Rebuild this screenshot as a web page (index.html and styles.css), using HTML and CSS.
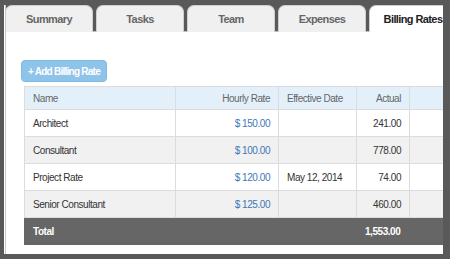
FILE: index.html
```html
<!DOCTYPE html>
<html lang="en">
<head>
  <meta charset="UTF-8" />
  <title>Billing Rates</title>
  <link rel="stylesheet" href="styles.css">
</head>
<body>
  <div class="frame">
    <div class="panel">
      <ul class="tabs">
        <li class="tab">Summary</li>
        <li class="tab">Tasks</li>
        <li class="tab">Team</li>
        <li class="tab">Expenses</li>
        <li class="tab active">Billing Rates</li>
      </ul>

      <div class="content">
        <button class="add-btn">+ Add Billing Rate</button>

        <table class="rates">
          <colgroup>
            <col style="width:151px">
            <col style="width:103px">
            <col style="width:78px">
            <col style="width:53px">
            <col style="width:80px">
          </colgroup>
          <thead>
            <tr>
              <th>Name</th>
              <th class="num">Hourly Rate</th>
              <th>Effective Date</th>
              <th class="num">Actual</th>
              <th></th>
            </tr>
          </thead>
          <tbody>
            <tr>
              <td>Architect</td>
              <td class="num rate">$ 150.00</td>
              <td></td>
              <td class="num">241.00</td>
              <td></td>
            </tr>
            <tr>
              <td>Consultant</td>
              <td class="num rate">$ 100.00</td>
              <td></td>
              <td class="num">778.00</td>
              <td></td>
            </tr>
            <tr>
              <td>Project Rate</td>
              <td class="num rate">$ 120.00</td>
              <td>May 12, 2014</td>
              <td class="num">74.00</td>
              <td></td>
            </tr>
            <tr>
              <td>Senior Consultant</td>
              <td class="num rate">$ 125.00</td>
              <td></td>
              <td class="num">460.00</td>
              <td></td>
            </tr>
          </tbody>
          <tfoot>
            <tr>
              <td>Total</td>
              <td></td>
              <td></td>
              <td class="num total-num">1,553.00</td>
              <td></td>
            </tr>
          </tfoot>
        </table>
      </div>
    </div>
  </div>
</body>
</html>
```

FILE: styles.css
```css
html, body {
  margin: 0;
  padding: 0;
  height: 100%;
}

body {
  background: #595959;
  font-family: "Liberation Sans", Arial, sans-serif;
  color: #333;
  overflow: hidden;
}

.frame {
  margin: 5px 7px 0 4px;
  height: 249px;
  background: #fff;
  padding-left: 1px;
  overflow: hidden;
}

.panel {
  height: 100%;
  border-left: 1px solid #c8c8c8;
  overflow: hidden;
}

.tabs {
  list-style: none;
  margin: 0 0 0 -1px;
  padding: 0;
  display: flex;
  gap: 3px;
  height: 26px;
  border-bottom: 1px solid #bdbdbd;
  background: #595959;
}

.tab {
  flex: 0 0 auto;
  width: 86px;
  height: 26px;
  line-height: 27px;
  text-align: center;
  font-size: 11px;
  font-weight: bold;
  letter-spacing: -0.6px;
  white-space: nowrap;
  color: #666;
  background: #f0f0f0;
  border: 1px solid #cfcfcf;
  border-bottom: none;
  border-radius: 7px 7px 0 0;
}

.tab.active {
  background: #fff;
  color: #222;
}

.content {
  padding: 28px 0 0 15px;
}

.add-btn {
  display: block;
  width: 86px;
  height: 22px;
  padding: 0;
  border: 1px solid #82b9e3;
  border-radius: 4px;
  background: #8fc4ea;
  color: #fff;
  font-family: "Liberation Sans", Arial, sans-serif;
  font-size: 10px;
  font-weight: bold;
  letter-spacing: -0.75px;
  white-space: nowrap;
  cursor: pointer;
}

.rates {
  margin: 4px 0 0 3px;
  border-collapse: collapse;
  table-layout: fixed;
  width: 465px;
  font-size: 10px;
  letter-spacing: -0.45px;
}

.rates th,
.rates td {
  border: 1px solid #dcdcdc;
  padding: 0 8px;
  text-align: left;
  white-space: nowrap;
}

.rates th {
  height: 22px;
  background: #e3f0fa;
  font-weight: normal;
  color: #666;
}

.rates td {
  height: 26px;
}

.rates tbody tr:nth-child(even) td {
  background: #f1f1f1;
}

.rates .num {
  text-align: right;
}

.rates .rate {
  color: #3b78b8;
}

.rates tfoot td {
  background: #666;
  color: #fff;
  font-weight: bold;
  border-color: #666;
}

.rates .total-num {
  padding-right: 13px;
}
```
